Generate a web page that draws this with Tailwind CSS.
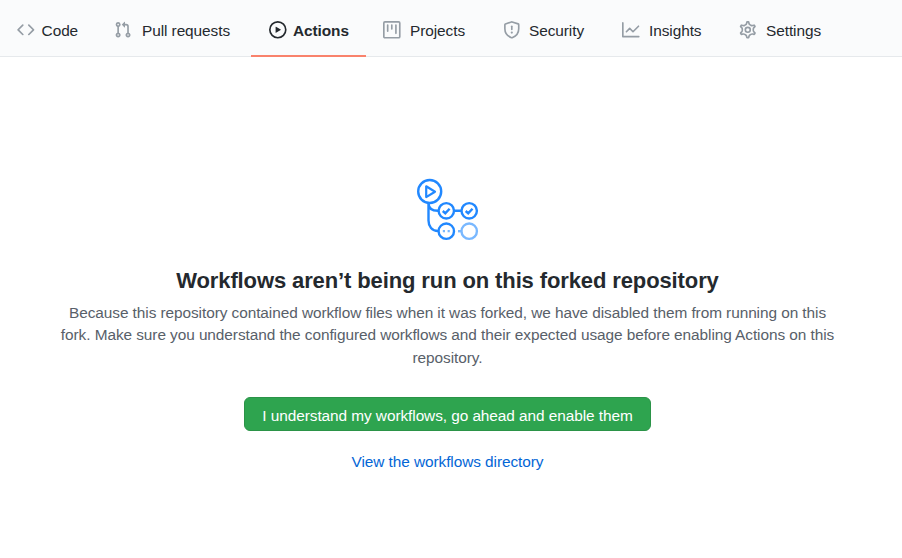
<!DOCTYPE html>
<html lang="en">
<head>
<meta charset="utf-8">
<title>Actions</title>
<script src="https://cdn.jsdelivr.net/npm/@tailwindcss/browser@4"></script>
</head>
<body class="bg-white text-[#24292e] font-['Liberation_Sans',Arial,sans-serif] text-[15.4px] tracking-[-0.07px] h-[558px] overflow-hidden">
<nav class="flex h-[57px] bg-[#fafbfc] border-b border-[#e6e9ec] leading-[22px] whitespace-nowrap">
  <a class="flex h-[57px] w-[98px] shrink-0 pl-[17px] pt-[20px]">
    <svg class="mt-[1px] size-[17.6px] text-[#959da5] shrink-0" viewBox="0 0 16 16" fill="currentColor"><path fill-rule="evenodd" d="M4.72 3.22a.75.75 0 011.06 1.06L2.06 8l3.72 3.72a.75.75 0 11-1.06 1.06L.47 8.53a.75.75 0 010-1.06l4.25-4.25zm6.56 0a.75.75 0 10-1.06 1.06L13.94 8l-3.72 3.72a.75.75 0 101.06 1.06l4.25-4.25a.75.75 0 000-1.06l-4.25-4.25z"/></svg>
    <span class="ml-[7px]">Code</span>
  </a>
  <a class="flex h-[57px] w-[153px] shrink-0 pl-[16px] pt-[20px]">
    <svg class="mt-[1px] size-[17.6px] text-[#959da5] shrink-0" viewBox="0 0 16 16" fill="currentColor"><path fill-rule="evenodd" d="M7.177 3.073L9.573.677A.25.25 0 0110 .854v4.792a.25.25 0 01-.427.177L7.177 3.427a.25.25 0 010-.354zM3.75 2.5a.75.75 0 100 1.5.75.75 0 000-1.5zm-2.25.75a2.25 2.25 0 113 2.122v5.256a2.251 2.251 0 11-1.5 0V5.372A2.25 2.25 0 011.5 3.25zM11 2.5h-1V4h1a1 1 0 011 1v5.628a2.251 2.251 0 101.5 0V5A2.5 2.5 0 0011 2.5zm1 10.25a.75.75 0 111.5 0 .75.75 0 01-1.5 0zM3.75 12a.75.75 0 100 1.5.75.75 0 000-1.5z"/></svg>
    <span class="ml-[10.4px]">Pull requests</span>
  </a>
  <a class="flex h-[57px] w-[115px] shrink-0 pl-[18px] pt-[20px] border-b-2 border-[#f9826c] font-bold">
    <svg class="mt-[1px] size-[17.6px] shrink-0" viewBox="0 0 16 16" fill="currentColor"><path fill-rule="evenodd" d="M1.5 8a6.5 6.5 0 1113 0 6.5 6.5 0 01-13 0zM8 0a8 8 0 100 16A8 8 0 008 0zM6.379 5.227A.25.25 0 006 5.442v5.117a.25.25 0 00.379.214l4.264-2.559a.25.25 0 000-.428L6.379 5.227z"/></svg>
    <span class="ml-[6.4px]">Actions</span>
  </a>
  <a class="flex h-[57px] w-[120px] shrink-0 pl-[17px] pt-[20px]">
    <svg class="mt-[1px] size-[17.6px] text-[#959da5] shrink-0" viewBox="0 0 16 16" fill="currentColor"><path fill-rule="evenodd" d="M1.75 0A1.75 1.75 0 000 1.75v12.5C0 15.216.784 16 1.75 16h12.5A1.75 1.75 0 0016 14.25V1.75A1.75 1.75 0 0014.25 0H1.75zM1.5 1.75a.25.25 0 01.25-.25h12.5a.25.25 0 01.25.25v12.5a.25.25 0 01-.25.25H1.75a.25.25 0 01-.25-.25V1.75zM11.75 3a.75.75 0 00-.75.75v7.5a.75.75 0 001.5 0v-7.5a.75.75 0 00-.75-.75zm-8.25.75a.75.75 0 011.5 0v5.5a.75.75 0 01-1.5 0v-5.5zM8 3a.75.75 0 00-.75.75v3.5a.75.75 0 001.5 0v-3.5A.75.75 0 008 3z"/></svg>
    <span class="ml-[9.4px]">Projects</span>
  </a>
  <a class="flex h-[57px] w-[119px] shrink-0 pl-[17px] pt-[20px]">
    <svg class="mt-[1px] size-[17.6px] text-[#959da5] shrink-0" viewBox="0 0 16 16" fill="none" stroke="currentColor" stroke-width="1.5"><path stroke-linejoin="round" d="M7.7.9 2.2 2.65a.7.7 0 0 0-.5.67V7c0 3.8 1.9 6.6 6 8.2q.3.1.6 0c4.1-1.6 6-4.4 6-8.2V3.32a.7.7 0 0 0-.5-.67L8.3.9a1 1 0 0 0-.6 0z"/><path stroke-linecap="round" d="M8 4.75v3"/><circle cx="8" cy="10.5" r="1" fill="currentColor" stroke="none"/></svg>
    <span class="ml-[8.4px]">Security</span>
  </a>
  <a class="flex h-[57px] w-[117px] shrink-0 pl-[17px] pt-[20px]">
    <svg class="mt-[1px] size-[17.6px] text-[#959da5] shrink-0" viewBox="0 0 16 16" fill="none" stroke="currentColor" stroke-width="1.5" stroke-linecap="round" stroke-linejoin="round"><path d="M.75 1.75v12.5h14.500M4 9.75 7 6.75l3 3 5-5"/></svg>
    <span class="ml-[9.4px]">Insights</span>
  </a>
  <a class="flex h-[57px] shrink-0 pl-[17px] pt-[20px]">
    <svg class="mt-[1px] size-[17.6px] text-[#959da5] shrink-0" viewBox="0 0 16 16" fill="none" stroke="currentColor" stroke-width="1.35"><path transform="translate(8 8) scale(1.11) translate(-8 -8)" d="M7.429 1.525a6.593 6.593 0 011.142 0c.036.003.108.036.137.146l.289 1.105c.147.56.55.967.997 1.189.174.086.341.183.501.29.417.278.97.423 1.53.27l1.102-.303c.11-.03.175.016.195.046.219.31.41.641.573.989.014.031.022.11-.059.19l-.815.806c-.411.406-.562.957-.53 1.456a4.588 4.588 0 010 .582c-.032.499.119 1.05.53 1.456l.815.806c.08.08.073.159.059.19a6.494 6.494 0 01-.573.99c-.02.029-.086.074-.195.045l-1.103-.303c-.559-.153-1.112-.008-1.529.27-.16.107-.327.204-.5.29-.449.222-.851.628-.998 1.189l-.289 1.105c-.029.11-.101.143-.137.146a6.613 6.613 0 01-1.142 0c-.036-.003-.108-.037-.137-.146l-.289-1.105c-.147-.56-.55-.967-.997-1.189a4.502 4.502 0 01-.501-.29c-.417-.278-.97-.423-1.53-.27l-1.102.303c-.11.03-.175-.016-.195-.046a6.492 6.492 0 01-.573-.989c-.014-.031-.022-.11.059-.19l.815-.806c.411-.406.562-.957.53-1.456a4.587 4.587 0 010-.582c.032-.499-.119-1.05-.53-1.456l-.815-.806c-.08-.08-.073-.159-.059-.19a6.44 6.44 0 01.573-.99c.02-.029.086-.075.195-.045l1.103.303c.559.153 1.112.008 1.529-.27.16-.107.327-.204.5-.29.449-.222.851-.628.998-1.189l.289-1.105c.029-.11.101-.143.137-.146z"/><circle cx="8" cy="8" r="2.25" stroke-width="1.5"/></svg>
    <span class="ml-[9.4px]">Settings</span>
  </a>
</nav>
<main class="flex w-[895px] flex-col items-center pt-[121px] text-center">
  <svg class="h-[64px] w-[64px]" viewBox="416 178 64 64" fill="none" stroke="#2188ff" stroke-width="2.4">
    <path d="M428.5 203v17.5c0 6 3.5 10.5 9.5 10.5M428.5 203c0 5 3.5 7.8 9.5 7.8M454 210.8h7.500"/>
    <circle cx="429.700" cy="191.500" r="11.500"/>
    <path d="M426.200 186.300v10.800l8.800-5.400z" stroke-width="2.200" stroke-linejoin="round"/>
    <circle cx="446.300" cy="210.800" r="7.700"/><circle cx="469.200" cy="210.800" r="7.700"/><circle cx="446.300" cy="231.200" r="7.700"/>
    <path d="m442.800 211 2.500 2.300 4.300-4.600M465.700 211l2.500 2.300 4.300-4.600"/>
    <path d="M442.800 231.200h2.200M447.600 231.200h2.200" stroke="#79b8ff" stroke-width="2.200"/>
    <g stroke="#79b8ff"><circle cx="469.200" cy="231.200" r="7.700"/><path d="M458 231.200h3.500"/></g>
  </svg>
  <h1 class="mt-[22px] text-[22px] leading-[33px] tracking-[-0.115px] font-bold whitespace-nowrap">Workflows aren’t being run on this forked repository</h1>
  <p class="mt-[5px] leading-[22.400px] text-[#586069] whitespace-nowrap">Because this repository contained workflow files when it was forked, we have disabled them from running on this<br>fork. Make sure you understand the configured workflows and their expected usage before enabling Actions on this<br>repository.</p>
  <button class="mt-[27.300px] h-[34px] w-[407px] rounded-[6px] border border-[#2b9348] bg-[#2ea44f] text-white whitespace-nowrap leading-[22px] pt-[4px]">I understand my workflows, go ahead and enable them</button>
  <a class="mt-[20px] leading-[22px] text-[#0366d6]">View the workflows directory</a>
</main>
</body>
</html>
